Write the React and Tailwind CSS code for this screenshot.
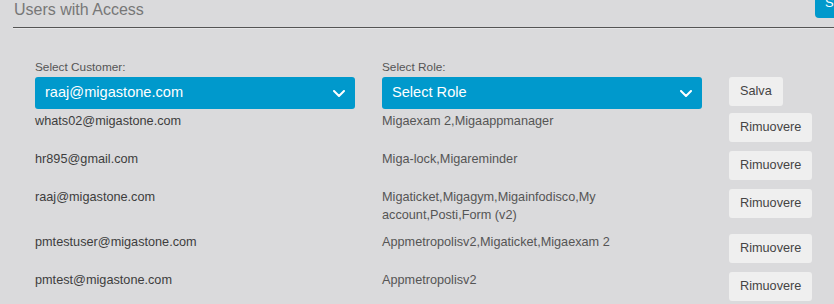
import React from "react";

const rows = [
  { email: "whats02@migastone.com", roles: "Migaexam 2,Migaappmanager" },
  { email: "hr895@gmail.com", roles: "Miga-lock,Migareminder" },
  { email: "raaj@migastone.com", roles: "Migaticket,Migagym,Migainfodisco,My account,Posti,Form (v2)" },
  { email: "pmtestuser@migastone.com", roles: "Appmetropolisv2,Migaticket,Migaexam 2" },
  { email: "pmtest@migastone.com", roles: "Appmetropolisv2" },
];

function Chevron() {
  return (
    <svg width="12" height="7" viewBox="0 0 12 7" fill="none">
      <polyline points="1,1 6,6 11,1" stroke="white" strokeWidth="2" strokeLinecap="round" strokeLinejoin="round" />
    </svg>
  );
}

function Select({ value }) {
  return (
    <div className="h-[32px] w-[320px] rounded-[3px] bg-[#0099cc] text-white text-[14.6px] pl-[10px] pr-[10px] flex items-center justify-between">
      <span>{value}</span>
      <Chevron />
    </div>
  );
}

function GrayButton({ children }) {
  return (
    <button className="h-[29px] px-[11px] rounded-[3px] bg-[#efefef] text-[12.7px] text-[#444] leading-none">
      {children}
    </button>
  );
}

export default function App() {
  return (
    <div
      className="w-[834px] h-[304px] overflow-hidden bg-[#dadadc]"
      style={{ fontFamily: '"Liberation Sans", Arial, sans-serif' }}
    >
      <div className="flex w-[872px] h-[27px] items-start">
        <div className="flex-1 pl-[14px] pt-[1px] text-[16px] leading-[18px] text-[#777]">Users with Access</div>
        <button className="shrink-0 w-[57px] h-[30px] mt-[-12px] rounded-[4px] bg-[#0099cc] text-white text-[13px] text-left pl-[10px]">
          Salva
        </button>
      </div>
      <div className="ml-[13px] h-px bg-[#555]" />
      <div className="ml-[13px] h-px bg-[#e6e6e8]" />

      <div className="pl-[35px] pt-[30px]">
        <div className="flex gap-[27px] items-start mb-[3px]">
          <div className="w-[320px]">
            <div className="text-[11.8px] leading-[16px] text-[#555] mb-[2px]">Select Customer:</div>
            <Select value="raaj@migastone.com" />
          </div>
          <div className="w-[320px]">
            <div className="text-[11.8px] leading-[16px] text-[#555] mb-[2px]">Select Role:</div>
            <Select value="Select Role" />
          </div>
          <div className="pt-[18px]">
            <GrayButton>Salva</GrayButton>
          </div>
        </div>

        {rows.map((r) => (
          <div key={r.email} className="flex gap-[27px] items-start">
            <div className="w-[320px] text-[12.7px] leading-[18px] text-[#3d3d3d] pb-[9px]">{r.email}</div>
            <div className="w-[320px] pb-[9px]">
              <div className="max-w-[245px] text-[12.7px] leading-[18px] text-[#555]">{r.roles}</div>
            </div>
            <div className="mt-[1px] mb-[8px]">
              <GrayButton>Rimuovere</GrayButton>
            </div>
          </div>
        ))}
      </div>
    </div>
  );
}
